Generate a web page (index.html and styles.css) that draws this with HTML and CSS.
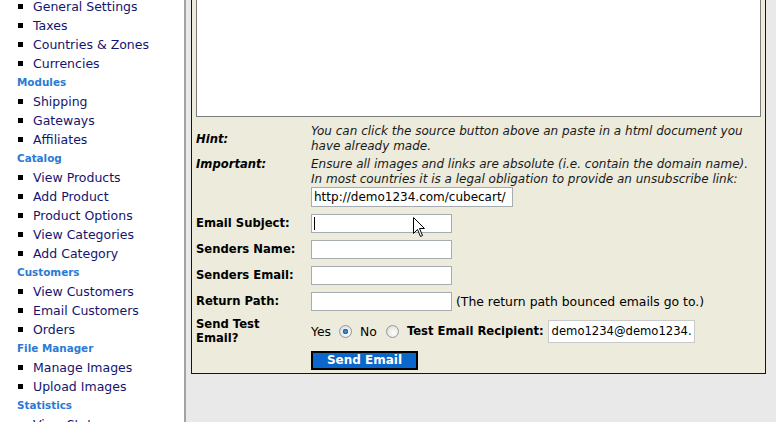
FILE: index.html
```html
<!DOCTYPE html>
<html>
<head>
<meta charset="utf-8">
<link rel="stylesheet" href="styles.css">
</head>
<body>
<div class="page">
  <nav class="sidebar">
    <ul class="menu">
      <li class="item">General Settings</li>
      <li class="item">Taxes</li>
      <li class="item">Countries &amp; Zones</li>
      <li class="item">Currencies</li>
      <li class="head">Modules</li>
      <li class="item">Shipping</li>
      <li class="item">Gateways</li>
      <li class="item">Affiliates</li>
      <li class="head">Catalog</li>
      <li class="item">View Products</li>
      <li class="item">Add Product</li>
      <li class="item">Product Options</li>
      <li class="item">View Categories</li>
      <li class="item">Add Category</li>
      <li class="head">Customers</li>
      <li class="item">View Customers</li>
      <li class="item">Email Customers</li>
      <li class="item">Orders</li>
      <li class="head">File Manager</li>
      <li class="item">Manage Images</li>
      <li class="item">Upload Images</li>
      <li class="head">Statistics</li>
      <li class="item">View Stats</li>
    </ul>
  </nav>
  <main class="main">
    <section class="box">
      <textarea class="editor"></textarea>
      <div class="row row-hint">
        <div class="label label-it">Hint:</div>
        <div class="note">You can click the source button above an paste in a html document you have already made.</div>
      </div>
      <div class="row row-important">
        <div class="label label-it label-top">Important:</div>
        <div class="note">Ensure all images and links are absolute (i.e. contain the domain name).<br>In most countries it is a legal obligation to provide an unsubscribe link:
          <div class="field field-url">http://demo1234.com/cubecart/</div>
        </div>
      </div>
      <div class="row row-field">
        <div class="label">Email Subject:</div>
        <div class="cell"><div class="field field-text"><span class="caret"></span></div></div>
      </div>
      <div class="row row-field">
        <div class="label">Senders Name:</div>
        <div class="cell"><div class="field field-text"></div></div>
      </div>
      <div class="row row-field">
        <div class="label">Senders Email:</div>
        <div class="cell"><div class="field field-text"></div></div>
      </div>
      <div class="row row-field">
        <div class="label">Return Path:</div>
        <div class="cell"><div class="field field-text"></div><span class="aside">(The return path bounced emails go to.)</span></div>
      </div>
      <div class="row row-test">
        <div class="label label-two">Send Test<br>Email?</div>
        <div class="cell">
          <span class="opt">Yes</span><span class="radio radio-on"></span>
          <span class="opt opt-no">No</span><span class="radio"></span>
          <span class="label recipient">Test Email Recipient:</span>
          <div class="field field-mail">demo1234@demo1234.</div>
        </div>
      </div>
      <div class="row row-btn">
        <div></div>
        <div class="cell"><span class="button">Send Email</span></div>
      </div>
    </section>
    <svg class="pointer" width="13" height="21" viewBox="0 0 13 21"><path d="M0.5 0.5 L0.5 16.5 L4.5 12.5 L7.5 19.5 L9.5 18.5 L6.5 11.5 L11.5 11.5 Z" fill="#fff" stroke="#000" stroke-width="1"/></svg>
  </main>
</div>
</body>
</html>
```
FILE: styles.css
```css
html, body {
  margin: 0;
  padding: 0;
  height: 100%;
  overflow: hidden;
}
body {
  background: #e9e9e9;
  font-family: "DejaVu Sans", Verdana, sans-serif;
  color: #000;
}
.page {
  display: flex;
  height: 100%;
}
.sidebar {
  width: 184px;
  flex: none;
  background: #fff;
  border-right: 2px solid #a3a3a3;
}
.menu {
  list-style: none;
  margin: -3px 0 0 0;
  padding: 0;
}
.menu li {
  height: 19px;
  line-height: 19px;
  white-space: nowrap;
}
.item {
  position: relative;
  padding-left: 33px;
  font-size: 12.5px;
  color: #14146e;
}
.item::before {
  content: "";
  position: absolute;
  left: 18px;
  top: 7px;
  width: 5px;
  height: 5px;
  background: #000;
}
.head {
  padding-left: 17px;
  font-size: 10.4px;
  font-weight: bold;
  color: #2a7ad5;
}
.main {
  position: relative;
  flex: 1;
  padding-left: 5px;
  padding-right: 10px;
}
.box {
  margin-top: -10px;
  background: #ecebdc;
  border: 1px solid #0b0b6e;
  padding: 4px 4px 3px 4px;
}
.editor {
  display: block;
  box-sizing: border-box;
  width: 100%;
  height: 122px;
  margin: 0;
  border: 1px solid #7c7c7c;
  background: #fff;
  resize: none;
}
.row {
  display: grid;
  grid-template-columns: 115px 1fr;
  align-items: center;
}
.row-hint {
  margin-top: 7px;
}
.row-important {
  margin-top: 3px;
}
.row-field {
  margin-top: 7px;
}
.row-test {
  margin-top: 5px;
  height: 30px;
}
.row-btn {
  margin-top: 5px;
}
.label {
  font-size: 11.6px;
  font-weight: bold;
  line-height: 15px;
  white-space: nowrap;
}
.label-it {
  font-style: italic;
}
.label-top {
  align-self: start;
}
.label-two {
  line-height: 14px;
}
.note {
  font-size: 12px;
  font-style: italic;
  line-height: 15px;
  color: #1a1a1a;
  padding-right: 10px;
}
.cell {
  display: flex;
  align-items: center;
}
.field {
  box-sizing: border-box;
  position: relative;
  background: #fff;
  border: 1px solid #a5acb2;
  font-size: 12px;
  font-style: normal;
  color: #000;
  white-space: nowrap;
  overflow: hidden;
}
.field-url {
  width: 202px;
  height: 20px;
  line-height: 18px;
  padding-left: 2px;
}
.field-text {
  width: 141px;
  height: 19px;
}
.field-mail {
  width: 147px;
  height: 23px;
  line-height: 21px;
  padding-left: 3px;
  font-size: 11.6px;
  border-color: #c9c9c9;
  margin-left: 4px;
}
.caret {
  position: absolute;
  left: 2px;
  top: 2px;
  width: 1px;
  height: 13px;
  background: #000;
}
.aside {
  margin-left: 4px;
  font-size: 12.4px;
}
.opt {
  font-size: 12.4px;
  margin-right: 8px;
}
.opt-no {
  margin-left: 8px;
  margin-right: 9px;
}
.radio {
  box-sizing: border-box;
  width: 13px;
  height: 13px;
  border-radius: 50%;
  border: 1px solid #8e9aa6;
  background: radial-gradient(circle at 60% 60%, #ffffff 0%, #e9e9e4 55%, #cfcfc8 100%);
}
.radio-on {
  background:
    radial-gradient(circle at 50% 50%, #4b9be0 0, #1e5fb0 2.5px, transparent 3px),
    radial-gradient(circle at 60% 60%, #ffffff 0%, #e9e9e4 55%, #cfcfc8 100%);
}
.recipient {
  margin-left: 8px;
}
.button {
  box-sizing: border-box;
  display: inline-block;
  width: 107px;
  height: 19px;
  line-height: 15px;
  text-align: center;
  background: #0c67cd;
  border: 2px solid #000;
  color: #fff;
  font-size: 12px;
  font-weight: bold;
}
.pointer {
  position: absolute;
  left: 227px;
  top: 217px;
}
```
